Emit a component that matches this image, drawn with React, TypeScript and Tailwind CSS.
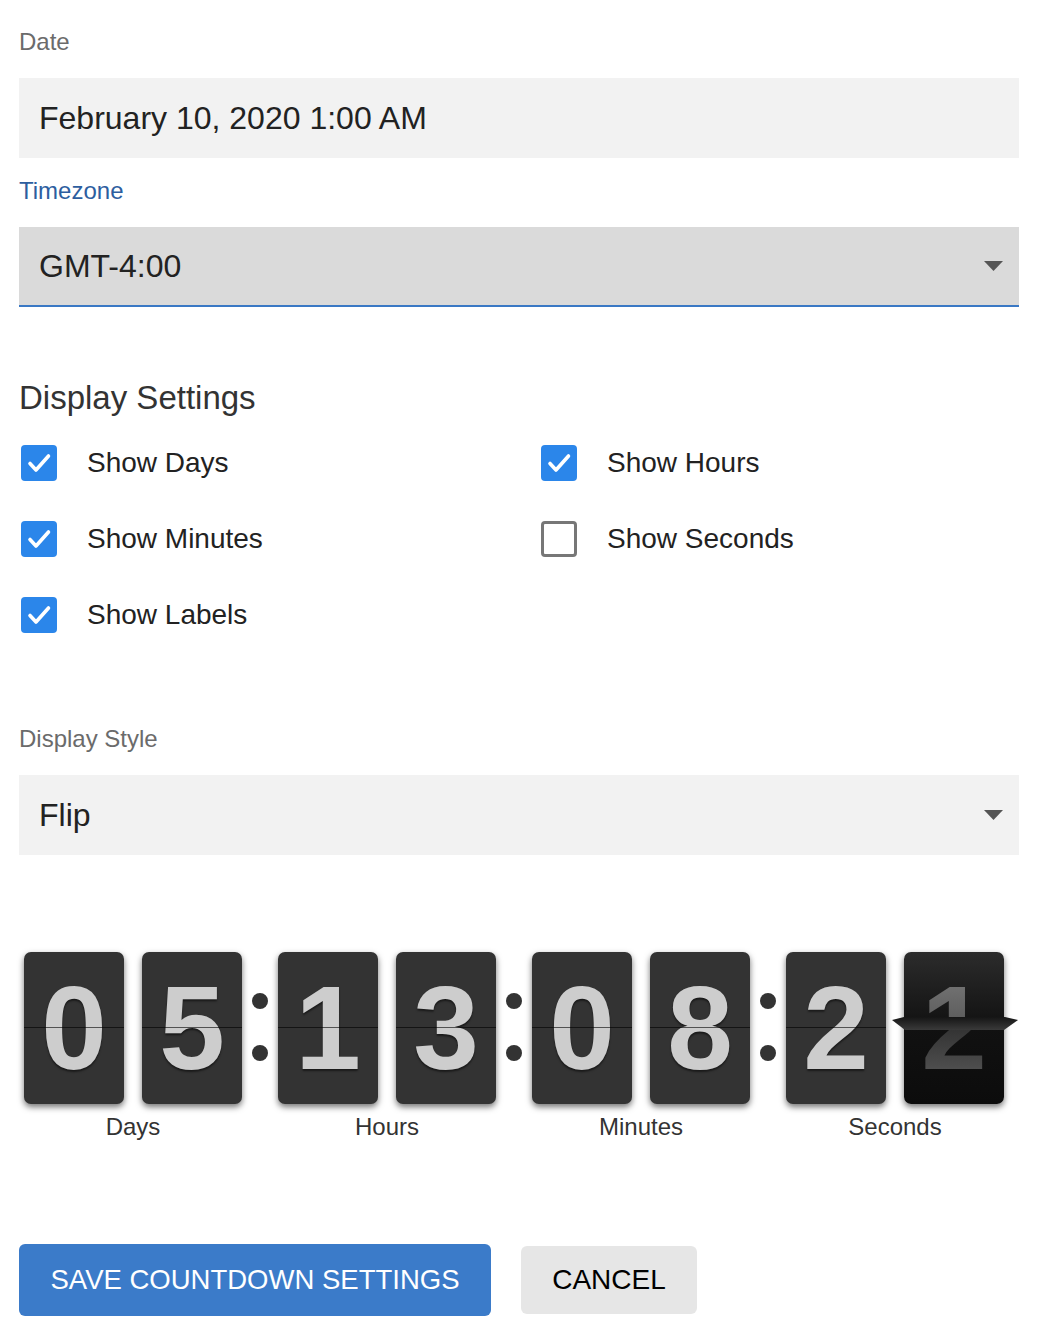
import React from 'react';

const font = { fontFamily: '"Liberation Sans", Arial, sans-serif' };

function Check({ checked, label }: { checked: boolean; label: string }) {
  return (
    <div className="flex h-[36px] items-center">
      <span className="ml-[2px] flex size-[36px] shrink-0 items-center justify-center">
        {checked ? (
          <span className="flex size-[36px] items-center justify-center rounded-[4px] bg-[#2b86ea]">
            <svg width="36" height="36" viewBox="0 0 36 36">
              <path d="M9 18.5l6 6.5L27.5 11" fill="none" stroke="#fff" strokeWidth="3.6" strokeLinecap="round" strokeLinejoin="round" />
            </svg>
          </span>
        ) : (
          <span className="size-[36px] rounded-[4px] border-[3px] border-[#777]" />
        )}
      </span>
      <span className="ml-[30px] text-[28px] leading-none text-[#222]">{label}</span>
    </div>
  );
}

function Arrow() {
  return (
    <svg width="19" height="10" viewBox="0 0 19 10" className="shrink-0">
      <path d="M0 0h19L9.5 10z" fill="#555" />
    </svg>
  );
}

function Card({ d }: { d: string }) {
  return (
    <div className="relative flex h-[152px] w-[100px] items-center justify-center rounded-[7px] bg-[#333] shadow-[0_3px_6px_rgba(0,0,0,0.55)]">
      <span className="text-[118px] font-bold leading-none text-[#cdcdcd] [text-shadow:0_2px_2px_rgba(0,0,0,0.5)]">{d}</span>
      <span className="absolute inset-x-0 top-[75px] h-px bg-black/60" />
    </div>
  );
}

function FlipCard() {
  return (
    <div className="relative flex h-[152px] w-[100px] items-center justify-center rounded-[7px] bg-gradient-to-b from-[#2c2c2c] via-[#111] to-[#0c0c0c] shadow-[0_3px_6px_rgba(0,0,0,0.55)]">
      <span className="bg-gradient-to-b from-[#7a7a7a] to-[#3a3a3a] bg-clip-text text-[118px] font-bold leading-none text-transparent [clip-path:inset(0_0_50%_0)]">
        1
      </span>
      <span className="absolute inset-0 flex items-center justify-center">
        <span className="bg-gradient-to-b from-[#1a1a1a] via-[#333] to-[#5a5a5a] bg-clip-text text-[118px] font-bold leading-none text-transparent [clip-path:inset(50%_0_0_0)]">
          2
        </span>
      </span>
      <svg className="absolute -left-[12px] top-[64px]" width="126" height="16" viewBox="0 0 126 16">
        <defs>
          <linearGradient id="flap" x1="0" y1="0" x2="0" y2="1">
            <stop offset="0" stopColor="#151515" />
            <stop offset="1" stopColor="#3a3a3a" />
          </linearGradient>
        </defs>
        <path d="M0 4L12 1h101l13 3-14 10H13z" fill="url(#flap)" />
      </svg>
    </div>
  );
}

function Colon() {
  return (
    <div className="flex h-[152px] w-[36px] flex-col items-center pt-[41px]">
      <span className="size-[16px] rounded-full bg-[#333]" />
      <span className="mt-[36px] size-[16px] rounded-full bg-[#333]" />
    </div>
  );
}

function Group({ a, b, label, flip }: { a: string; b: string; label: string; flip?: boolean }) {
  return (
    <div className="flex flex-col items-center">
      <div className="flex gap-[18px]">
        <Card d={a} />
        {flip ? <FlipCard /> : <Card d={b} />}
      </div>
      <span className="mt-[9px] text-[24px] leading-[28px] text-[#333]">{label}</span>
    </div>
  );
}

export default function App() {
  return (
    <div className="min-h-[1336px] bg-white px-[19px] pt-[28px]" style={font}>
      <div className="text-[24px] leading-[28px] text-[#6b6b6b]">Date</div>
      <div className="mt-[22px] flex h-[80px] items-center bg-[#f2f2f2] pl-[20px] text-[32px] text-[#222]">
        February 10, 2020 1:00 AM
      </div>

      <div className="mt-[19px] text-[24px] leading-[28px] text-[#2d5e9f]">Timezone</div>
      <div className="mt-[22px] flex h-[80px] items-center justify-between border-b-2 border-[#3a78c4] bg-[#dadada] pl-[20px] pr-[16px] text-[32px] text-[#222]">
        <span>GMT-4:00</span>
        <Arrow />
      </div>

      <h2 className="mt-[71px] text-[33px] leading-[40px] text-[#333]">Display Settings</h2>
      <div className="mt-[27px] grid grid-cols-[520px_1fr] gap-y-[40px]">
        <Check checked label="Show Days" />
        <Check checked label="Show Hours" />
        <Check checked label="Show Minutes" />
        <Check checked={false} label="Show Seconds" />
        <Check checked label="Show Labels" />
      </div>

      <div className="mt-[92px] text-[24px] leading-[28px] text-[#6b6b6b]">Display Style</div>
      <div className="mt-[22px] flex h-[80px] items-center justify-between bg-[#f2f2f2] pl-[20px] pr-[16px] text-[32px] text-[#222]">
        <span>Flip</span>
        <Arrow />
      </div>

      <div className="mt-[97px] flex items-start pl-[5px]">
        <Group a="0" b="5" label="Days" />
        <Colon />
        <Group a="1" b="3" label="Hours" />
        <Colon />
        <Group a="0" b="8" label="Minutes" />
        <Colon />
        <Group a="2" b="1" label="Seconds" flip />
      </div>

      <div className="mt-[103px] flex items-center gap-[30px] pb-[20px]">
        <button className="flex h-[72px] w-[472px] items-center justify-center rounded-[6px] bg-[#3b7bc9] text-[27.5px] text-white">
          SAVE COUNTDOWN SETTINGS
        </button>
        <button className="flex h-[68px] w-[176px] items-center justify-center rounded-[6px] bg-[#e6e6e6] text-[28px] text-black">
          CANCEL
        </button>
      </div>
    </div>
  );
}
